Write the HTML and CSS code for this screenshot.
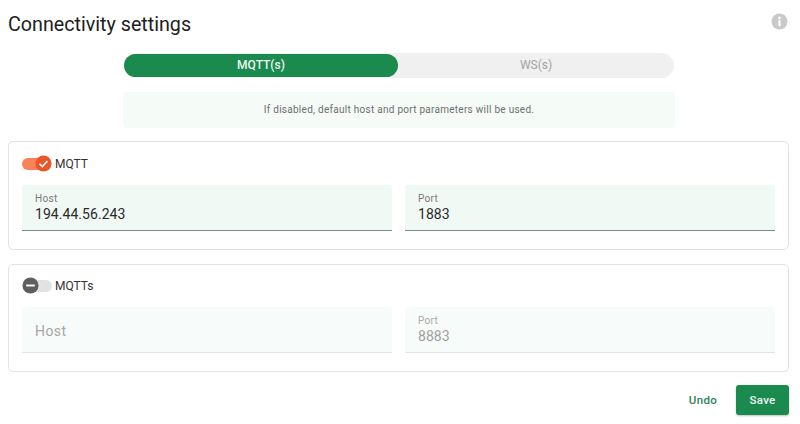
FILE: index.html
```html
<!DOCTYPE html>
<html lang="en">
<head>
<meta charset="utf-8">
<title>Connectivity settings</title>
<link rel="stylesheet" href="styles.css">
</head>
<body>
<main class="page">
  <header class="head">
    <h1 class="title">Connectivity settings</h1>
    <svg class="info" viewBox="0 0 18 18" aria-hidden="true">
      <circle cx="9" cy="9" r="8.5" fill="#c9c9c9"/>
      <circle cx="9" cy="5.2" r="1.4" fill="#fff"/>
      <rect x="7.8" y="7.6" width="2.4" height="6.4" fill="#fff"/>
    </svg>
  </header>
  <div class="tabs">
    <div class="tab tab-on">MQTT(s)</div>
    <div class="tab">WS(s)</div>
  </div>
  <div class="note">If disabled, default host and port parameters will be used.</div>
  <section class="card">
    <div class="switch-row">
      <span class="switch switch-on">
        <span class="track"></span>
        <svg class="thumb" viewBox="0 0 18 18" aria-hidden="true">
          <circle cx="9" cy="9" r="8.5" fill="#e8562a"/>
          <path d="M4.8 9.4l3 2.8 5.4-5.8" fill="none" stroke="#fff" stroke-width="1.7"/>
        </svg>
      </span>
      <span class="switch-label">MQTT</span>
    </div>
    <div class="fields">
      <div class="field">
        <span class="field-label">Host</span>
        <span class="field-value">194.44.56.243</span>
      </div>
      <div class="field">
        <span class="field-label">Port</span>
        <span class="field-value">1883</span>
      </div>
    </div>
  </section>
  <section class="card card-off">
    <div class="switch-row">
      <span class="switch switch-off">
        <span class="track"></span>
        <svg class="thumb" viewBox="0 0 18 18" aria-hidden="true">
          <circle cx="9" cy="9" r="8.5" fill="#5f5f5f"/>
          <rect x="4.4" y="8" width="9.2" height="2" fill="#fff"/>
        </svg>
      </span>
      <span class="switch-label">MQTTs</span>
    </div>
    <div class="fields">
      <div class="field field-off">
        <span class="field-placeholder">Host</span>
      </div>
      <div class="field field-off">
        <span class="field-label">Port</span>
        <span class="field-value">8883</span>
      </div>
    </div>
  </section>
  <footer class="actions">
    <button class="btn-text" type="button">Undo</button>
    <button class="btn-save" type="button">Save</button>
  </footer>
</main>
</body>
</html>
```
FILE: styles.css
```css
* { box-sizing: border-box; }
html, body { margin: 0; padding: 0; background: #fff; }
body { font-family: Roboto, "Liberation Sans", sans-serif; color: #212121; }
.page { width: 800px; height: 424px; padding: 0 11px 0 8px; overflow: hidden; }
.head { height: 53px; display: flex; justify-content: space-between; align-items: flex-start; }
.title { margin: 13px 0 0; font-size: 19.7px; line-height: 24px; font-weight: 400; }
.info { width: 17px; height: 17px; margin: 13px 1px 0 0; }
.tabs { width: 550px; height: 25px; margin-left: 116px; display: flex; background: #f0f0f0; border-radius: 13px; }
.tab { flex: 0 0 274px; height: 23px; line-height: 23px; text-align: center; font-size: 12px; font-weight: 500; color: #a3a3a3; border-radius: 12px; margin-top: 1px; }
.tab + .tab { flex: 1; font-weight: 400; }
.tab-on { background: #1b8a4f; color: #eef7f1; }
.note { width: 552px; height: 36px; margin: 14px 0 13px 115px; background: #f5fcf8; border-radius: 4px; line-height: 35px; text-align: center; font-size: 10px; letter-spacing: .27px; color: #6e6e6e; }
.card { height: 109px; border: 1px solid #e2e2e2; border-radius: 5px; padding: 13px 13px 0; }
.card-off { height: 108px; margin-top: 14px; padding-top: 12px; }
.switch-row { height: 18px; display: flex; align-items: center; gap: 3px; }
.switch { position: relative; width: 30px; height: 18px; display: block; }
.track { position: absolute; left: 0; top: 3px; width: 28px; height: 12px; border-radius: 6px; }
.thumb { position: absolute; top: 0; width: 17px; height: 17px; }
.switch-on .track { background: #fb8257; }
.switch-on .thumb { left: 13px; }
.switch-off .track { background: #e2e2e2; left: 2px; }
.switch-off .thumb { left: 0; }
.switch-label { font-size: 12px; font-weight: 400; color: #333; }
.fields { display: flex; gap: 13px; margin-top: 12px; }
.field { flex: 0 0 370px; height: 46px; padding: 8px 13px 0; background: #f1f9f5; border-bottom: 1px solid #7d8c86; border-radius: 3px 3px 0 0; display: flex; flex-direction: column; }
.field-label { font-size: 10px; line-height: 12px; letter-spacing: .3px; color: #7a7a7a; }
.field-value { font-size: 14px; line-height: 20px; letter-spacing: .05px; color: #2a2a2a; margin-top: -1px; }
.field-off { background: #f7fbf9; border-bottom-color: #e4e4e4; }
.field-off .field-label { color: #a8a8a8; }
.field-off .field-value { color: #a0a0a0; }
.field-placeholder { font-size: 14px; line-height: 32px; letter-spacing: .4px; color: #a6a6a6; }
.actions { margin-top: 13px; display: flex; justify-content: flex-end; align-items: center; gap: 19px; }
.btn-text, .btn-save { border: 0; font-family: inherit; font-size: 11.5px; font-weight: 500; letter-spacing: .3px; }
.btn-text { background: none; padding: 0; color: #2c8159; }
.btn-save { width: 53px; height: 30px; background: #1b8a4f; color: #eef7f1; border-radius: 3px; box-shadow: 0 1px 2px rgba(0,0,0,.25); }
```
